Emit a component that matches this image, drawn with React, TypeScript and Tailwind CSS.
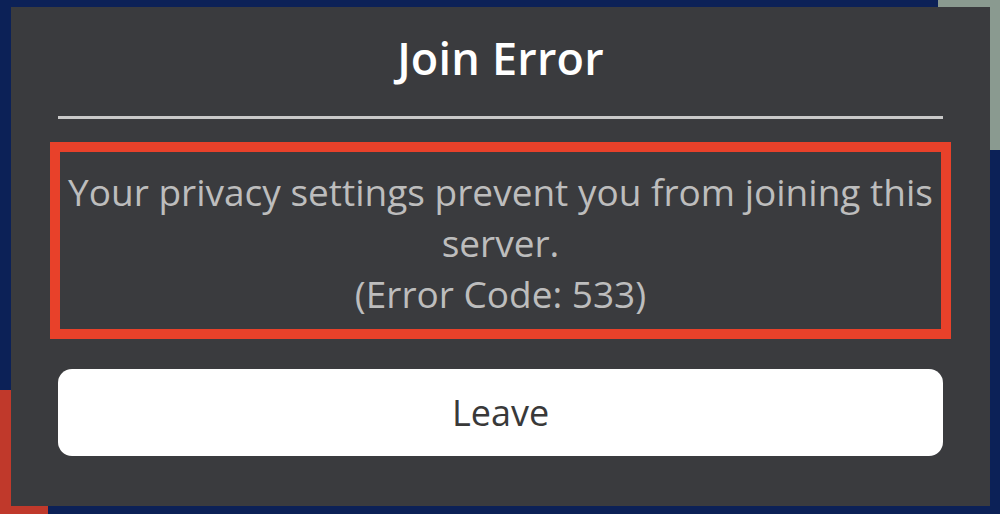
import React from 'react'

// ─── Constants ───────────────────────────────────────────────────────────────
const FONT = { fontFamily: '"Open Sans", "Noto Sans", sans-serif' }

// ─── Main Component ──────────────────────────────────────────────────────────
const App: React.FC = () => {
  return (
    <div className="relative h-[514px] w-[1000px] overflow-hidden bg-[#0c2157]" style={FONT}>
      {/* background scraps peeking round the dialog */}
      <div className="absolute right-0 top-0 h-[150px] w-[62px] bg-[#8a9a90]" />
      <div className="absolute bottom-0 left-0 h-[124px] w-[48px] bg-[#c0392b]" />

      {/* ── Dialog ─────────────────────────────────────────────────────── */}
      <div className="relative ml-[11px] mt-[7px] flex h-[499px] w-[979px] flex-col bg-[#3a3b3e] px-[47px]">
        <div className="flex h-[109px] items-center justify-center pb-[8px]">
          <h1 className="text-[45px] font-semibold tracking-[0.2px] text-white">Join Error</h1>
        </div>

        <div className="h-[3px] w-full bg-[#c9c9c9]" />

        <div className="-mx-[8px] mt-[23px] flex h-[197px] flex-col items-center justify-center border-[10px] border-[#e8412a] pt-[4px] text-center text-[37px] leading-[51px] text-[#bdbdbd]">
          <p>Your privacy settings prevent you from joining this</p>
          <p>server.</p>
          <p>(Error Code: 533)</p>
        </div>

        <button
          type="button"
          className="mt-[30px] flex h-[87px] w-full items-center justify-center rounded-[14px] bg-white text-[36px] text-[#393939]"
        >
          Leave
        </button>
      </div>
    </div>
  )
}

export default App
